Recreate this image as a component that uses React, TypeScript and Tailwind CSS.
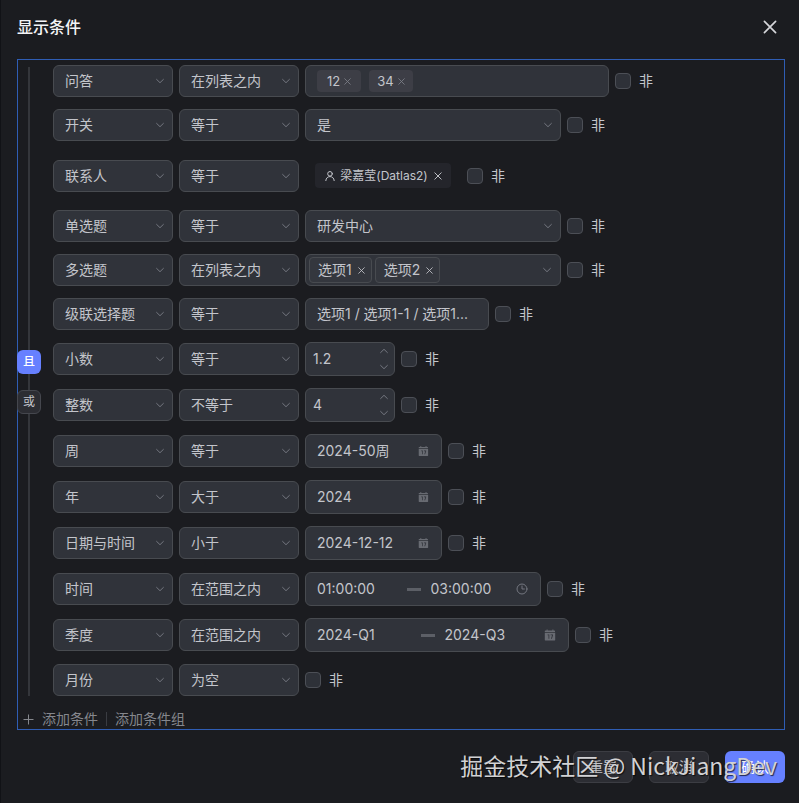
import { useState } from 'react'
import type { ReactNode } from 'react'

const FIELD = 'rounded-md border border-[#484b50] bg-[#30333a]'

function Chevron({ up = false }: { up?: boolean }) {
  return (
    <svg width="10" height="6" viewBox="0 0 10 6" fill="none" stroke="#747780" strokeLinecap="round" strokeLinejoin="round" aria-hidden="true">
      <path d={up ? 'M1.6 4.6 5 1.3l3.4 3.3' : 'M1.6 1.4 5 4.7l3.4-3.3'} />
    </svg>
  )
}

function Cross({ className }: { className: string }) {
  return (
    <svg className={className} viewBox="0 0 10 10" fill="none" stroke="currentColor" strokeWidth="1.2" strokeLinecap="round" aria-hidden="true">
      <path d="M1 1l8 8M9 1L1 9" />
    </svg>
  )
}

function CalendarIcon() {
  return (
    <svg width="12" height="12" viewBox="0 0 12 12" aria-hidden="true">
      <path fill="#686b72" d="M2.6.6h1v.9h4.800V.6h1v.9h1.1c.3 0 .5.2.5.5v1H.8V2c0-.3.2-.5.5-.5h1.3z" />
      <path fill="#686b72" fillRule="evenodd" d="M.8 3.7h10.400V11c0 .3-.2.5-.5.5H1.300c-.3 0-.5-.2-.5-.5zm2.8 1.8v.8h.9v3.400h.8V5.500zm3 0v.8h1.500L7 9.700h.9l1.100-3.500v-.7z" />
    </svg>
  )
}

function ClockIcon() {
  return (
    <svg width="12" height="12" viewBox="0 0 12 12" fill="none" stroke="#747780" strokeLinecap="round" aria-hidden="true">
      <circle cx="6" cy="6" r="5" />
      <path d="M6 3v3h2.4" />
    </svg>
  )
}

function Select({ value, label, width }: { value: string; label: string; width: string }) {
  return (
    <div className={`relative shrink-0 ${width}`}>
      <select aria-label={label} className={`h-8 w-full appearance-none pr-7 pl-[11px] ${FIELD}`}>
        <option>{value}</option>
      </select>
      <span className="pointer-events-none absolute inset-y-0 right-2 flex items-center">
        <Chevron />
      </span>
    </div>
  )
}

function TagInput() {
  return (
    <div className={`flex h-8 w-76 items-center gap-2 px-[11px] ${FIELD}`}>
      {['12', '34'].map(t => (
        <span key={t} className="flex h-[22px] w-11 items-center justify-center gap-1 rounded bg-[#3d3e46] text-[13px]">
          {t}
          <button aria-label={`移除 ${t}`} className="text-[#7d8088]"><Cross className="size-[7px]" /></button>
        </span>
      ))}
    </div>
  )
}

function Contact() {
  return (
    <div className="flex h-[45px] items-center px-2.5">
      <span className="flex h-[25px] w-34 items-center justify-center gap-1 rounded bg-[#24252b] text-xs whitespace-nowrap">
        <svg width="12" height="12" viewBox="0 0 12 12" fill="none" stroke="currentColor" strokeLinecap="round" aria-hidden="true">
          <circle cx="6" cy="3.8" r="2.3" />
          <path d="M1.8 10.6c.2-2.6 2-4 4.2-4s4 1.4 4.2 4" />
        </svg>
        梁嘉莹(Datlas2)
        <button aria-label="移除联系人" className="ml-0.5"><Cross className="size-2" /></button>
      </span>
    </div>
  )
}

function MultiSelect() {
  return (
    <div className={`flex h-8 w-64 items-center gap-[3px] pr-2 pl-[3px] ${FIELD}`}>
      {['选项1', '选项2'].map(t => (
        <span key={t} className="flex h-[26px] items-center gap-1.5 rounded border border-[#484b50] bg-[#34373e] pr-1.5 pl-2">
          {t}
          <button aria-label={`移除 ${t}`}><Cross className="size-[7px]" /></button>
        </span>
      ))}
      <button aria-label="展开选项" className="ml-auto"><Chevron /></button>
    </div>
  )
}

function NumberInput({ value, label }: { value: string; label: string }) {
  return (
    <div className={`flex h-[34px] w-[90px] items-center pr-[5px] pl-[7px] ${FIELD}`}>
      <input aria-label={label} defaultValue={value} className="w-full min-w-0 bg-transparent outline-none" />
      <span className="flex flex-col gap-2.5">
        <button aria-label="增加"><Chevron up /></button>
        <button aria-label="减少"><Chevron /></button>
      </span>
    </div>
  )
}

function DateInput({ value, label }: { value: string; label: string }) {
  return (
    <div className={`flex h-[34px] w-[137px] items-center pr-3 pl-[11px] ${FIELD}`}>
      <input aria-label={label} defaultValue={value} className="w-full min-w-0 bg-transparent outline-none" />
      <CalendarIcon />
    </div>
  )
}

function RangeInput({ from, to, label, width, icon }: { from: string; to: string; label: string; width: string; icon: ReactNode }) {
  return (
    <div className={`flex h-[34px] items-center pr-3 pl-[11px] ${width} ${FIELD}`}>
      <input aria-label={`${label}开始`} defaultValue={from} className="min-w-0 grow basis-1 bg-transparent outline-none" />
      <span className="mr-2.5 h-[3px] w-3.5 bg-[#5c5f66]" />
      <input aria-label={`${label}结束`} defaultValue={to} className="min-w-0 grow basis-0 bg-transparent outline-none" />
      {icon}
    </div>
  )
}

const ROWS: { field: string; op: string; control?: ReactNode }[] = [
  { field: '问答', op: '在列表之内', control: <TagInput /> },
  { field: '开关', op: '等于', control: <Select value="是" label="开关值" width="w-64" /> },
  { field: '联系人', op: '等于', control: <Contact /> },
  { field: '单选题', op: '等于', control: <Select value="研发中心" label="单选题值" width="w-64" /> },
  { field: '多选题', op: '在列表之内', control: <MultiSelect /> },
  {
    field: '级联选择题',
    op: '等于',
    control: <button className={`h-8 w-46 truncate px-[11px] text-left ${FIELD}`}>选项1 / 选项1-1 / 选项1...</button>,
  },
  { field: '小数', op: '等于', control: <NumberInput value="1.2" label="小数值" /> },
  { field: '整数', op: '不等于', control: <NumberInput value="4" label="整数值" /> },
  { field: '周', op: '等于', control: <DateInput value="2024-50周" label="周值" /> },
  { field: '年', op: '大于', control: <DateInput value="2024" label="年值" /> },
  { field: '日期与时间', op: '小于', control: <DateInput value="2024-12-12" label="日期值" /> },
  { field: '时间', op: '在范围之内', control: <RangeInput from="01:00:00" to="03:00:00" label="时间" width="w-59" icon={<ClockIcon />} /> },
  { field: '季度', op: '在范围之内', control: <RangeInput from="2024-Q1" to="2024-Q3" label="季度" width="w-66" icon={<CalendarIcon />} /> },
  { field: '月份', op: '为空' },
]

export default function App() {
  const [logic, setLogic] = useState('且')

  return (
    <div className="flex min-h-screen flex-col border-l border-[#111216] bg-[#1b1c20] pr-3.5 pl-4 font-['Inter','Noto_Sans_CJK_SC',sans-serif] text-sm text-[#c3c5cb]">
      <header className="flex h-[59px] items-center justify-between pr-2 pb-1.5">
        <h1 className="text-base font-medium text-[#f4f4f6]">显示条件</h1>
        <button aria-label="关闭" className="text-[#d5d6da]"><Cross className="size-3.5" /></button>
      </header>

      <main className="pt-1.5 ring-1 ring-[#2f5db4] ring-inset">
        <div className="flex gap-3">
          <div className="flex w-6 flex-col items-center pt-0.5">
            <span className="w-0.5 flex-1 bg-[#34363b]" />
            {['且', '或'].map(l => (
              <div key={l} className="contents">
                {l === '或' && <span className="h-4 w-0.5 bg-[#34363b]" />}
                <button
                  onClick={() => setLogic(l)}
                  className={`size-6 rounded-md text-xs ${logic === l ? 'bg-[#6680ff] font-medium text-white' : 'border border-[#45474e] bg-[#2c2d33]'}`}
                >
                  {l}
                </button>
              </div>
            ))}
            <span className="w-0.5 flex-1 bg-[#34363b]" />
          </div>

          <div className="flex min-w-0 flex-1 flex-col gap-3">
            {ROWS.map(r => (
              <div key={r.field} className="flex items-center gap-1.5">
                <Select value={r.field} label="字段" width="w-30" />
                <Select value={r.op} label="条件" width="w-30" />
                {r.control}
                <label className="flex items-center gap-2">
                  <input type="checkbox" className="size-4 appearance-none rounded border border-[#4c4f56] bg-[#2e3138] checked:bg-[#6680ff]" />
                  非
                </label>
              </div>
            ))}
          </div>
        </div>

        <div className="flex h-[34px] items-center pt-3 pl-1.5 text-[#85878d]">
          <button className="flex items-center gap-2">
            <svg width="11" height="11" viewBox="0 0 11 11" stroke="currentColor" aria-hidden="true">
              <path d="M5.5 .5v10M.5 5.5h10" />
            </svg>
            添加条件
          </button>
          <span className="mx-2 h-3.5 w-px bg-[#3a3c42]" />
          <button>添加条件组</button>
        </div>
      </main>

      <footer className="relative mt-[21px] mb-5 flex justify-end gap-4">
        <button className="h-8 w-15 rounded-md border border-[#3c3d43] bg-[#2c2d33]">重置</button>
        <button className="h-8 w-15 rounded-md border border-[#3c3d43] bg-[#2c2d33]">取消</button>
        <button className="h-8 w-15 rounded-md bg-[#6680ff] text-white">确认</button>
        <span className="pointer-events-none absolute inset-y-0 right-2 flex items-center pb-1 font-['Noto_Sans_CJK_SC',sans-serif] text-[23px] whitespace-nowrap text-[#d2d2d4] [text-shadow:1px_1px_1px_#000000b0]">
          掘金技术社区 @ NickJiangDev
        </span>
      </footer>
    </div>
  )
}
